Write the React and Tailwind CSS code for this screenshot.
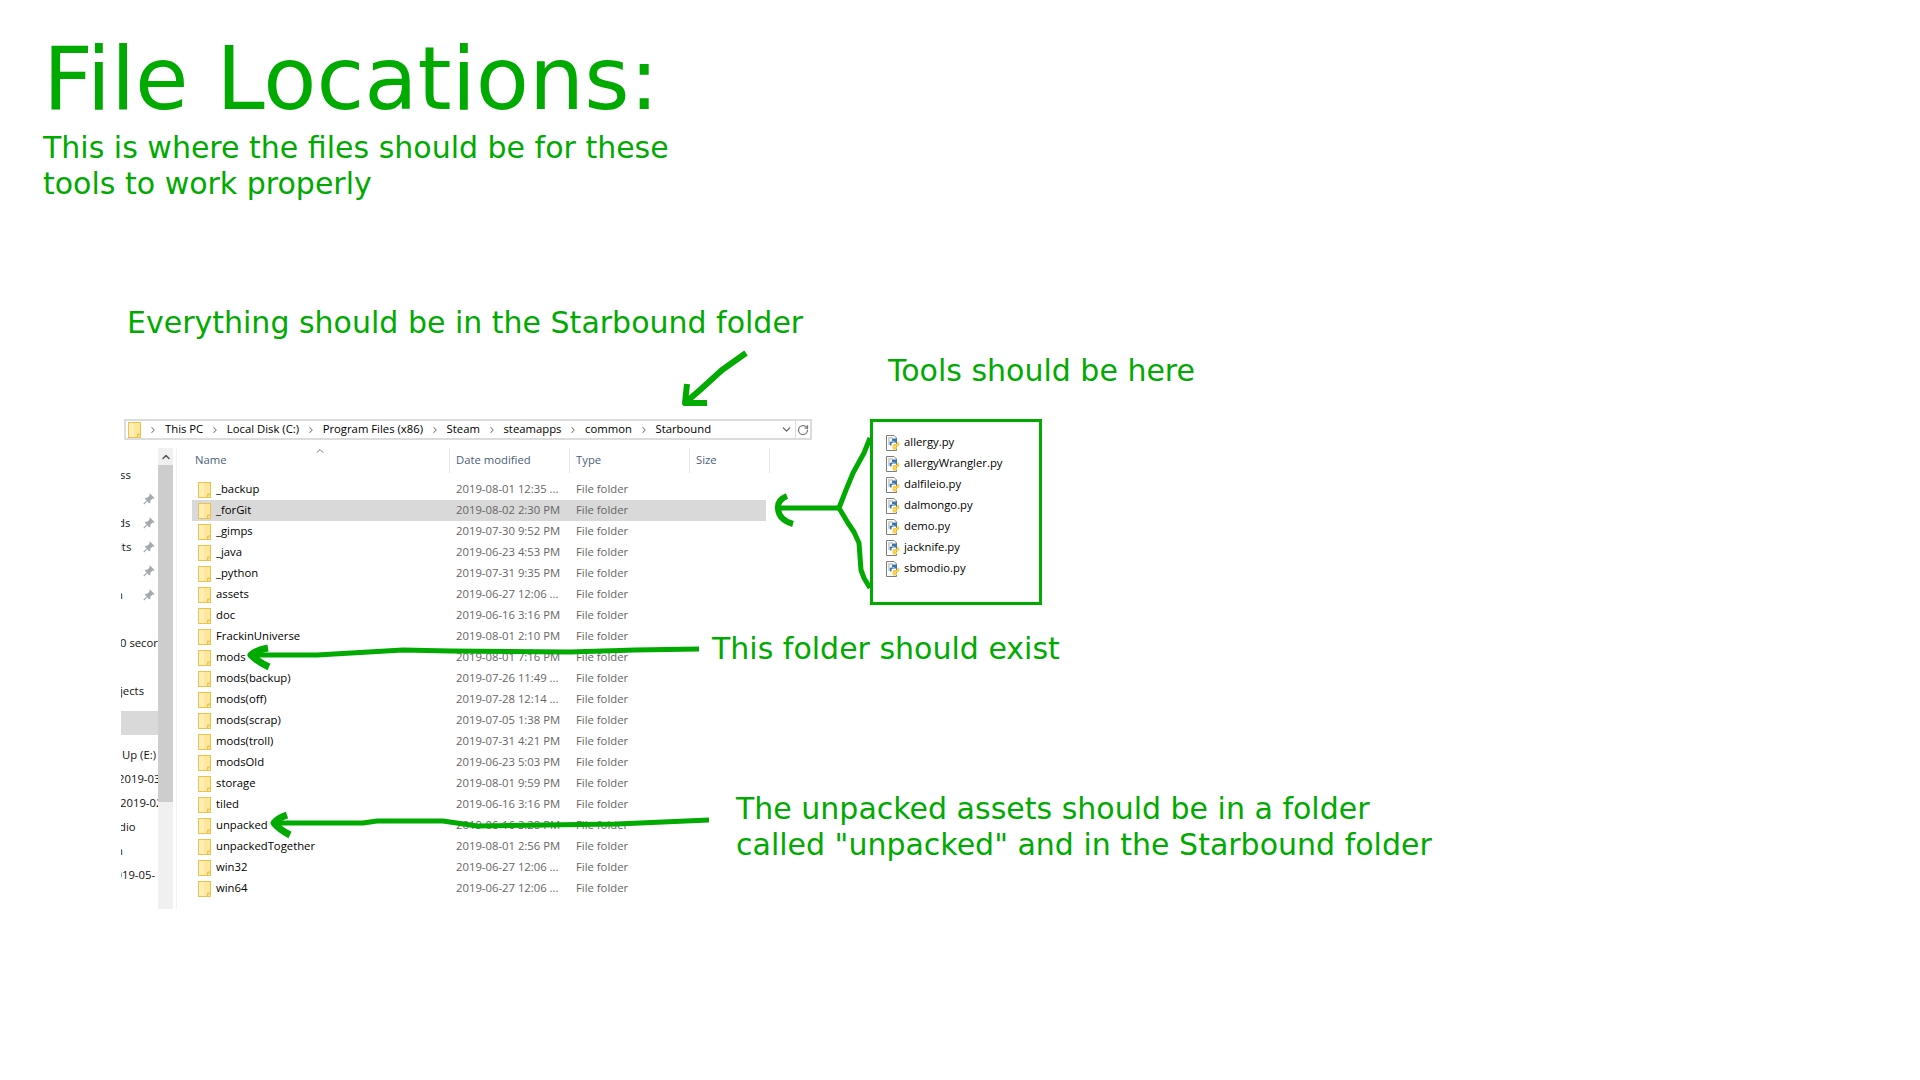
import { ChevronDown, ChevronRight, ChevronUp, RotateCw } from "lucide-react";

const crumbs = ["This PC", "Local Disk (C:)", "Program Files (x86)", "Steam", "steamapps", "common", "Starbound"];

const folders = [
  ["_backup", "2019-08-01 12:35 ..."],
  ["_forGit", "2019-08-02 2:30 PM"],
  ["_gimps", "2019-07-30 9:52 PM"],
  ["_java", "2019-06-23 4:53 PM"],
  ["_python", "2019-07-31 9:35 PM"],
  ["assets", "2019-06-27 12:06 ..."],
  ["doc", "2019-06-16 3:16 PM"],
  ["FrackinUniverse", "2019-08-01 2:10 PM"],
  ["mods", "2019-08-01 7:16 PM"],
  ["mods(backup)", "2019-07-26 11:49 ..."],
  ["mods(off)", "2019-07-28 12:14 ..."],
  ["mods(scrap)", "2019-07-05 1:38 PM"],
  ["mods(troll)", "2019-07-31 4:21 PM"],
  ["modsOld", "2019-06-23 5:03 PM"],
  ["storage", "2019-08-01 9:59 PM"],
  ["tiled", "2019-06-16 3:16 PM"],
  ["unpacked", "2019-06-16 3:28 PM"],
  ["unpackedTogether", "2019-08-01 2:56 PM"],
  ["win32", "2019-06-27 12:06 ..."],
  ["win64", "2019-06-27 12:06 ..."],
];

const tools = ["allergy.py", "allergyWrangler.py", "dalfileio.py", "dalmongo.py", "demo.py", "jacknife.py", "sbmodio.py"];

// clipped quick access labels, [text, pinned, left offset]
const sidebar = [
  ["ss", false, "-ml-px"],
  ["", true, ""],
  ["ds", true, "-ml-[3px]"],
  ["its", true, "-ml-[2px]"],
  ["", true, ""],
  ["n", true, "-ml-[5px]"],
  ["", false, ""],
  ["0 secor", false, "-ml-px"],
  ["", false, ""],
  ["jects", false, "-ml-[1px]"],
];

const sidebarLower = [
  ["Up (E:)", "ml-px"],
  ["2019-03", "-ml-[3px]"],
  ["2019-02", "-ml-[1px]"],
  ["dio", "-ml-[2px]"],
  ["n", "-ml-[5px]"],
  ["2019-05-", "-ml-[12px]"],
];

function FolderIcon({ className = "" }) {
  return (
    <svg width="13" height="16" viewBox="0 0 13 16" className={className}>
      <rect x="0.5" y="0.5" width="12" height="15" fill="#fde79b" stroke="#e9c24f" />
      <rect x="1" y="1" width="5" height="14" fill="#fdeeb8" />
      <path d="M9.5 15.5 V12 H12.5" fill="#f6d46a" stroke="#e9c24f" />
    </svg>
  );
}

function PythonIcon() {
  return (
    <svg width="15" height="16" viewBox="0 0 15 16" className="shrink-0">
      <path d="M0.5 0.5 H8 L10.5 3 V15.5 H0.5 Z" fill="#fff" stroke="#7d7d7d" />
      <path d="M2 3 H7 M2 5 H4 M2 7 H4 M2 9 H3" stroke="#a9a9a9" />
      <path d="M7 3.5 H10 Q11 3.5 11 5 V7.5 H7 Q5.5 7.5 5.5 9 V10.5 H4.5 Q3.5 10.5 3.5 8.5 Q3.5 6.5 5 6.5 H8.5 V6 H6 V4.5 Q6 3.5 7 3.5 Z" fill="#3a76ad" />
      <path d="M11.5 6.5 Q13.5 6.5 13.5 9 Q13.5 11 12 11 H8.5 V11.5 H11 V13.5 Q11 14.5 9.5 14.5 H8 Q6.5 14.5 6.5 13 V10.5 Q6.5 9 8 9 H10.5 Q11.5 9 11.5 8 Z" fill="#f6cf45" />
    </svg>
  );
}

function PinIcon() {
  return (
    <svg width="12" height="12" viewBox="0 0 12 12" className="shrink-0">
      <path d="M7 0.5 L11.5 5 L10.5 6 L9.5 5.6 L7.5 7.6 L7.4 9.6 L6.4 10.4 L1.8 5.8 L2.6 4.8 L4.6 4.6 L6.6 2.6 L6.2 1.5 Z" fill="#a3a9ae" />
      <path d="M3.6 8.2 L0.8 11.2" stroke="#a3a9ae" strokeWidth="1.2" />
    </svg>
  );
}

function Strokes() {
  return (
    <svg width="1920" height="1080" viewBox="0 0 1920 1080" className="absolute top-0 left-0 pointer-events-none" fill="none" stroke="#00aa00" strokeLinejoin="round">
      {/* top arrow */}
      <path d="M746 353 L722 370 L700 390 L686 402" strokeWidth="6" />
      <path d="M687 384 L685 403 L707 403" strokeWidth="6" />
      {/* brace */}
      <path d="M778 508 H839" strokeWidth="5" />
      <path d="M787 496 Q777 500 778 509 Q779 520 793 524" strokeWidth="6" />
      <path d="M870 438 L864 453 L853 473 L846 490 L839 508 L848 523 L854 532 L859 543 L861 570 L864 578 L870 588" strokeWidth="5" />
      {/* this folder arrow */}
      <path d="M699 649 L635 650 L570 652 L450 651 L403 650 L317 655 L252 655" strokeWidth="5" />
      <path d="M268 648 Q256 650 251 655 Q258 662 269 667" strokeWidth="7" />
      {/* unpacked arrow */}
      <path d="M709 820 L617 824 L477 826 L443 821 L377 821 L363 823 L276 823" strokeWidth="5" />
      <path d="M287 815 Q278 818 274 823 Q280 830 290 835" strokeWidth="7" />
    </svg>
  );
}

export default function App() {
  return (
    <div className="relative w-[1920px] h-[1080px] overflow-hidden bg-white font-['DejaVu_Sans',sans-serif] text-[#00aa00]">
      <div className="pt-[29px] pl-[43px] text-[87px] leading-[100px]">File Locations:</div>
      <div className="pl-[43px] mt-[1px] text-[30px] leading-[36px]">
        <div>This is where the files should be for these</div>
        <div>tools to work properly</div>
      </div>
      <div className="pl-[127px] mt-[103px] text-[30px] leading-[36px]">Everything should be in the Starbound folder</div>

      <div className="flex items-start pl-[121px] mt-[78px] font-['Open_Sans',sans-serif] text-[11.3px] text-black">
        {/* explorer window */}
        <div className="w-[692px] flex flex-col">
          <div className="ml-[3px] h-[21px] w-[688px] border-2 border-[#dcdcdc] flex items-center">
            <FolderIcon className="ml-[2px] shrink-0" />
            <div className="flex items-center ml-[7px] flex-1 text-black">
              {crumbs.map((c, i) => (
                <div key={c} className="flex items-center">
                  {i > 0 && <ChevronRight size={10} strokeWidth={2.5} className="mx-[6.8px] text-[#777]" />}
                  {i === 0 && <ChevronRight size={10} strokeWidth={2.5} className="mr-[7px] text-[#777]" />}
                  <span className="whitespace-nowrap">{c}</span>
                </div>
              ))}
            </div>
            <ChevronDown size={13} strokeWidth={2.5} className="text-[#666]" />
            <div className="w-px h-full ml-[2px] bg-[#dcdcdc]" />
            <RotateCw size={12} strokeWidth={2.5} className="text-[#777] mx-[1px]" />
          </div>

          <div className="flex mt-[8px] h-[461px]">
            {/* quick access sidebar */}
            <div className="w-[37px] overflow-hidden pt-[15px] flex flex-col text-[#111]">
              {sidebar.map(([text, pinned, off], i) => (
                <div key={i} className="h-6 flex items-center justify-between pr-[3px] whitespace-nowrap">
                  <span className={off}>{text}</span>
                  {pinned && <PinIcon />}
                </div>
              ))}
              <div className="h-6 mt-[8px] bg-[#d9d9d9]" />
              <div className="mt-[8px]">
                {sidebarLower.map(([text, off]) => (
                  <div key={text} className="h-6 flex items-center whitespace-nowrap">
                    <span className={off}>{text}</span>
                  </div>
                ))}
              </div>
            </div>

            {/* scrollbar */}
            <div className="w-[15px] bg-[#f0f0f0] flex flex-col">
              <div className="h-[17px] flex items-center justify-center">
                <ChevronUp size={12} strokeWidth={3} className="text-[#555]" />
              </div>
              <div className="h-[337px] bg-[#cdcdcd]" />
            </div>
            <div className="w-px ml-[3px] bg-[#f2f2f2]" />

            {/* file list */}
            <div className="relative flex flex-col flex-1 ml-[15px]">
              <ChevronUp size={12} className="absolute left-[122px] -top-[3px] text-[#777]" />
              <div className="h-[25px] flex items-center text-[#4c607a]">
                <div className="w-[257px] pl-[3px]">Name</div>
                <div className="w-[120px] pl-[6px] self-stretch flex items-center border-l border-[#e5e5e5]">Date modified</div>
                <div className="w-[120px] pl-[6px] self-stretch flex items-center border-l border-[#e5e5e5]">Type</div>
                <div className="w-[81px] pl-[6px] self-stretch flex items-center border-x border-[#e5e5e5]">Size</div>
              </div>
              <div className="mt-[6px] flex flex-col">
                {folders.map(([name, date]) => (
                  <div key={name} className={`h-[21px] w-[574px] flex items-center ${name === "_forGit" ? "bg-[#d9d9d9]" : ""}`}>
                    <FolderIcon className="ml-[6px] shrink-0" />
                    <span className="w-[245px] pl-[5px] whitespace-nowrap text-black">{name}</span>
                    <span className="w-[120px] whitespace-nowrap text-[#666]">{date}</span>
                    <span className="text-[#666]">File folder</span>
                  </div>
                ))}
              </div>
            </div>
          </div>
        </div>

        {/* tools box */}
        <div className="ml-[57px] w-[172px] h-[186px] border-[3px] border-[#00aa00] pt-[10px] pl-[13px] flex flex-col">
          {tools.map((t) => (
            <div key={t} className="h-[21px] flex items-center gap-[3px] text-black">
              <PythonIcon />
              <span>{t}</span>
            </div>
          ))}
        </div>
      </div>

      <Strokes />

      {/* annotations */}
      <div className="absolute left-[888px] top-[353px] text-[30px] leading-[36px]">Tools should be here</div>
      <div className="absolute left-[712px] top-[631px] text-[30px] leading-[36px]">This folder should exist</div>
      <div className="absolute left-[736px] top-[791px] text-[30px] leading-[36px]">
        <div>The unpacked assets should be in a folder</div>
        <div>called "unpacked" and in the Starbound folder</div>
      </div>
    </div>
  );
}
